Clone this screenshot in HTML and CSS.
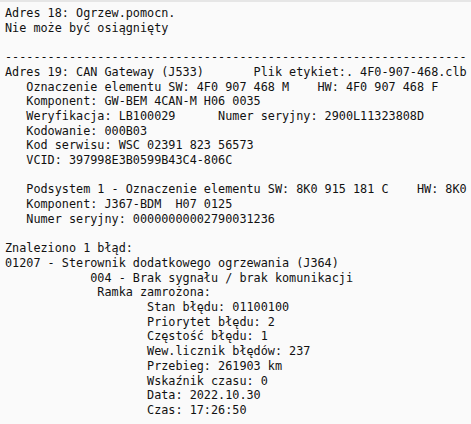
FILE: index.html
```html
<!DOCTYPE html>
<html lang="pl">
<head>
<meta charset="utf-8">
<link rel="stylesheet" href="styles.css">
</head>
<body>
<div class="log"><pre class="text">Adres 18: Ogrzew.pomocn.
Nie może być osiągnięty

-----------------------------------------------------------------
Adres 19: CAN Gateway (J533)       Plik etykiet:. 4F0-907-468.clb
   Oznaczenie elementu SW: 4F0 907 468 M    HW: 4F0 907 468 F
   Komponent: GW-BEM 4CAN-M H06 0035
   Weryfikacja: LB100029      Numer seryjny: 2900L11323808D
   Kodowanie: 000B03
   Kod serwisu: WSC 02391 823 56573
   VCID: 397998E3B0599B43C4-806C

   Podsystem 1 - Oznaczenie elementu SW: 8K0 915 181 C    HW: 8K0
   Komponent: J367-BDM  H07 0125
   Numer seryjny: 00000000002790031236

Znaleziono 1 błąd:
01207 - Sterownik dodatkowego ogrzewania (J364)
            004 - Brak sygnału / brak komunikacji
             Ramka zamrożona:
                    Stan błędu: 01100100
                    Priorytet błędu: 2
                    Częstość błędu: 1
                    Wew.licznik błędów: 237
                    Przebieg: 261903 km
                    Wskaźnik czasu: 0
                    Data: 2022.10.30
                    Czas: 17:26:50</pre></div>
</body>
</html>
```
FILE: styles.css
```css
html, body {
  margin: 0;
  padding: 0;
  background: #fafafa;
}
body {
  width: 471px;
  height: 424px;
  overflow: hidden;
}
.log {
  border-top: 2px solid #e6e6e6;
  padding: 4px 0 0 5px;
  height: 418px;
  overflow: hidden;
}
.text {
  margin: 0;
  font-family: "DejaVu Sans Mono", "Liberation Mono", monospace;
  font-size: 11.8px;
  line-height: 14.7px;
  color: #111111;
  white-space: pre;
}
```
